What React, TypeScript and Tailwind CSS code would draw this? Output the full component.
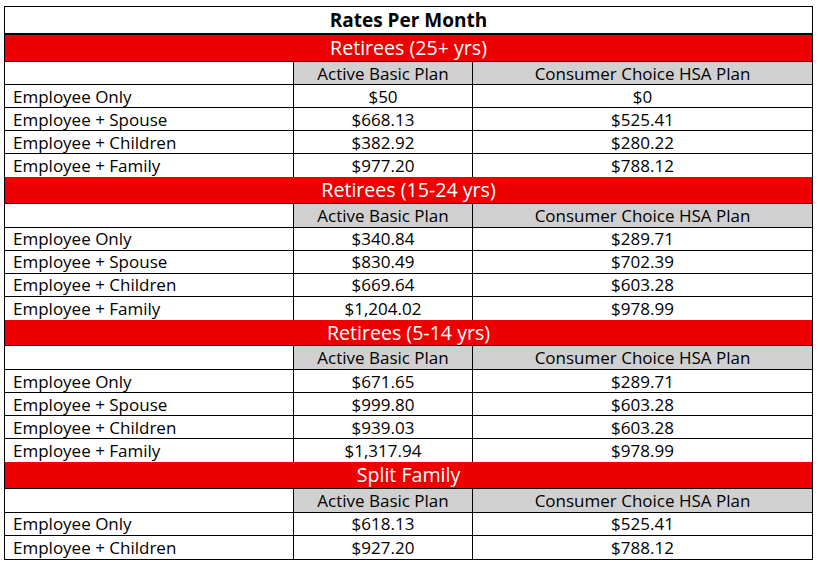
import React from "react";

type Section = {
  title: string;
  rows: [string, string, string][];
};

const sections: Section[] = [
  {
    title: "Retirees (25+ yrs)",
    rows: [
      ["Employee Only", "$50", "$0"],
      ["Employee + Spouse", "$668.13", "$525.41"],
      ["Employee + Children", "$382.92", "$280.22"],
      ["Employee + Family", "$977.20", "$788.12"],
    ],
  },
  {
    title: "Retirees (15-24 yrs)",
    rows: [
      ["Employee Only", "$340.84", "$289.71"],
      ["Employee + Spouse", "$830.49", "$702.39"],
      ["Employee + Children", "$669.64", "$603.28"],
      ["Employee + Family", "$1,204.02", "$978.99"],
    ],
  },
  {
    title: "Retirees (5-14 yrs)",
    rows: [
      ["Employee Only", "$671.65", "$289.71"],
      ["Employee + Spouse", "$999.80", "$603.28"],
      ["Employee + Children", "$939.03", "$603.28"],
      ["Employee + Family", "$1,317.94", "$978.99"],
    ],
  },
  {
    title: "Split Family",
    rows: [
      ["Employee Only", "$618.13", "$525.41"],
      ["Employee + Children", "$927.20", "$788.12"],
    ],
  },
];

export default function App() {
  return (
    <div className="min-h-[563px] w-[821px] bg-white pt-[6px] pl-[4px] font-['Open_Sans',sans-serif] text-black">
      <div className="flex w-[809px] flex-col border border-black">
        <div className="flex h-[28px] items-center justify-center border-b-2 border-black text-[19px] font-bold leading-[26px]">
          Rates Per Month
        </div>
        {sections.map((s) => (
          <div key={s.title} className="flex flex-col">
            <div className="flex h-[26.7px] items-center justify-center border-b border-black bg-[#ee0000] text-[19.6px] leading-[26px] text-white">
              {s.title}
            </div>
            <div className="flex h-[23.7px] border-b border-black text-[17px] leading-[23px]">
              <div className="w-[289px] border-r border-black" />
              <div className="flex w-[179px] items-center justify-center border-r border-black bg-[#d0d0d0]">
                Active Basic Plan
              </div>
              <div className="flex flex-1 items-center justify-center bg-[#d0d0d0]">
                Consumer Choice HSA Plan
              </div>
            </div>
            {s.rows.map((r, i) => (
              <div
                key={r[0] + i}
                className="flex h-[23px] border-b border-black text-[17px] leading-[23px] last:border-b-0"
              >
                <div className="flex w-[289px] items-center border-r border-black pl-[8px]">{r[0]}</div>
                <div className="flex w-[179px] items-center justify-center border-r border-black">{r[1]}</div>
                <div className="flex flex-1 items-center justify-center">{r[2]}</div>
              </div>
            ))}
          </div>
        ))}
      </div>
    </div>
  );
}
